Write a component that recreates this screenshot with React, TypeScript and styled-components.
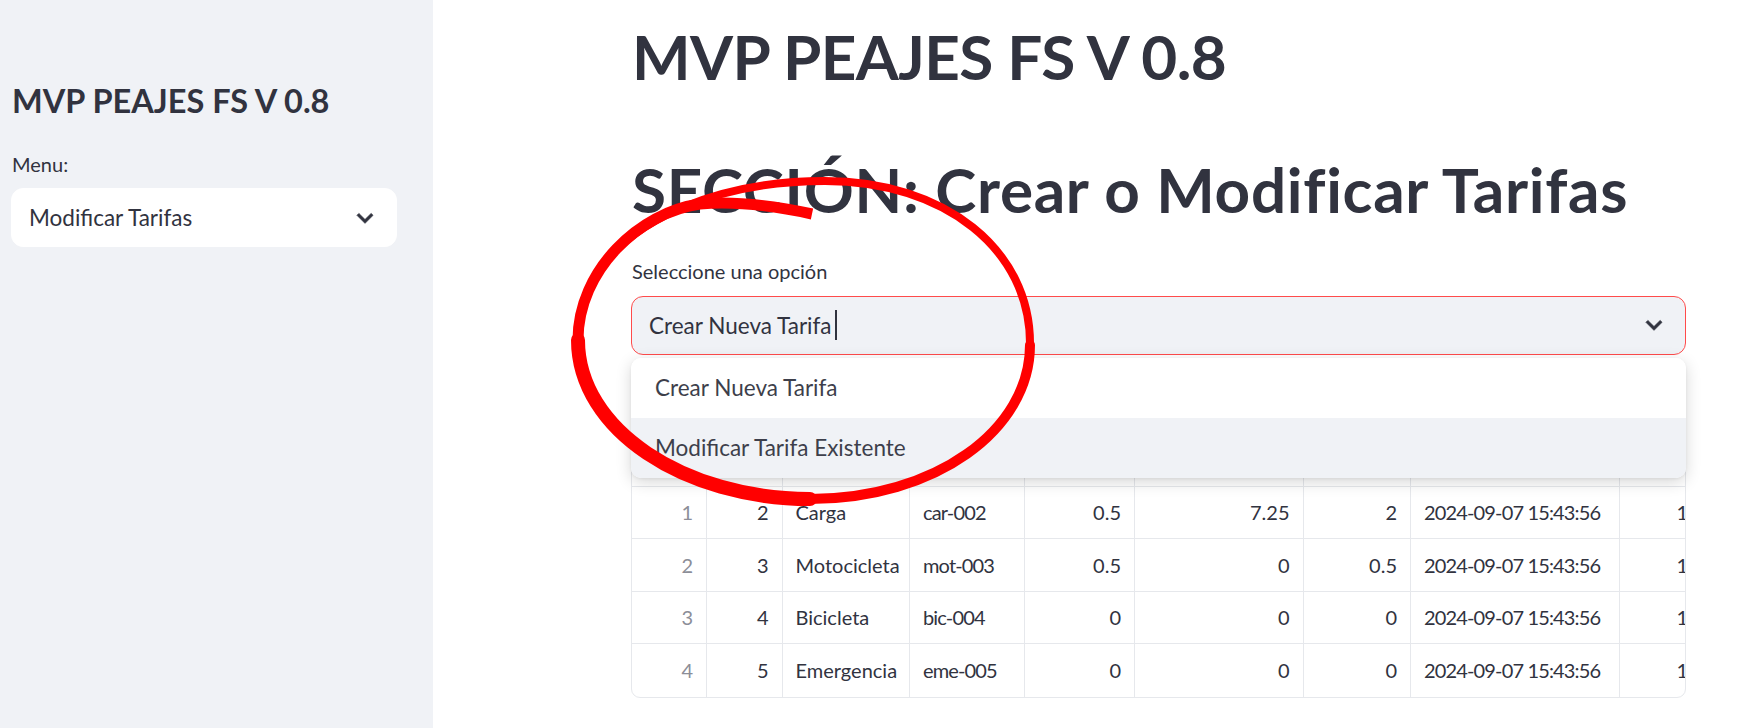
import React from "react";
import styled, { createGlobalStyle } from "styled-components";

const GlobalStyle = createGlobalStyle`
  html, body { margin: 0; padding: 0; background: #ffffff; }
  body { font-family: Lato, "Noto Sans", sans-serif; color: #31333f; }
  * { box-sizing: border-box; }
`;

const Page = styled.div`
  position: relative;
  display: flex;
  width: 1737px;
  height: 728px;
  overflow: hidden;
  background: #ffffff;
`;

const Sidebar = styled.aside`
  flex: 0 0 433px;
  height: 100%;
  background: #f0f2f6;
  padding: 79.5px 36px 0 11px;
  display: flex;
  flex-direction: column;
`;

const SideTitle = styled.h2`
  margin: 0 0 30px 1px;
  font-size: 32.5px;
  line-height: 42px;
  font-weight: 700;
  color: #31333f;
  white-space: nowrap;
`;

const FieldLabel = styled.label<{ $indent?: number }>`
  display: block;
  margin: 0 0 12.5px ${(p) => p.$indent ?? 1}px;
  font-size: 20px;
  line-height: 24px;
  color: #31333f;
`;

const SelectBox = styled.div<{ $variant: "light" | "focused" }>`
  position: relative;
  height: 59px;
  border-radius: 12px;
  display: flex;
  align-items: center;
  justify-content: space-between;
  padding: 0 15px 0 17px;
  font-size: 22.5px;
  color: #31333f;
  background: ${(p) => (p.$variant === "light" ? "#ffffff" : "#f0f2f6")};
  border: 1px solid ${(p) => (p.$variant === "light" ? "#ffffff" : "#ff4b4b")};
`;

const SelectValue = styled.span`
  display: flex;
  align-items: center;
  white-space: nowrap;
`;

const Caret = styled.span`
  display: inline-block;
  width: 2px;
  height: 30px;
  margin-left: 3px;
  background: #31333f;
`;

const Main = styled.main`
  flex: 1 1 auto;
  padding: 18px 0 0 198px;
`;

const Content = styled.div`
  width: 1055px;
  display: flex;
  flex-direction: column;
`;

const Title = styled.h1<{ $gap?: number; $tracking?: number }>`
  margin: ${(p) => p.$gap ?? 0}px 0 0 1px;
  font-size: 62px;
  line-height: 76px;
  font-weight: 700;
  letter-spacing: ${(p) => p.$tracking ?? 0}px;
  color: #31333f;
  white-space: nowrap;
`;

const FieldBlock = styled.div`
  margin-top: 32px;
  position: relative;
  z-index: 2;
`;

const SelectWrap = styled.div`
  position: relative;
`;

const Menu = styled.ul`
  position: absolute;
  left: 0;
  right: 0;
  top: calc(100% + 3px);
  margin: 0;
  padding: 0;
  list-style: none;
  background: #ffffff;
  border-radius: 10px;
  overflow: hidden;
  box-shadow: 0 4px 16px rgba(0, 0, 0, 0.16), 0 1px 3px rgba(0, 0, 0, 0.06);
`;

const MenuItem = styled.li<{ $active?: boolean }>`
  height: 60px;
  display: flex;
  align-items: center;
  padding-left: 24px;
  font-size: 22.5px;
  color: #3d3f4b;
  background: ${(p) => (p.$active ? "#f0f2f6" : "#ffffff")};
`;

const Table = styled.div`
  margin-top: 26px;
  width: 1055px;
  border: 1px solid #e6e8ec;
  border-radius: 9px;
  overflow: hidden;
  font-size: 20px;
`;

const Row = styled.div<{ $header?: boolean }>`
  display: grid;
  grid-template-columns: 75px 75.5px 127.5px 115px 110px 168.5px 107.5px 209px 82px;
  height: 52.5px;
  border-bottom: 1px solid #e6e8ec;
  &:last-child { border-bottom: none; }
  color: ${(p) => (p.$header ? "#808495" : "#31333f")};
`;

const Cell = styled.div<{ $align?: "left" | "right"; $muted?: boolean; $digits?: boolean }>`
  display: flex;
  align-items: center;
  justify-content: ${(p) => (p.$align === "left" ? "flex-start" : "flex-end")};
  padding: 0 13px;
  border-right: 1px solid #e6e8ec;
  white-space: nowrap;
  overflow: hidden;
  letter-spacing: ${(p) => (p.$digits ? "-0.85px" : "0")};
  color: ${(p) => (p.$muted ? "#8c8e98" : "inherit")};
`;

const Overlay = styled.svg`
  position: absolute;
  left: 0;
  top: 0;
  width: 1737px;
  height: 728px;
  pointer-events: none;
  z-index: 10;
`;

const Chevron = () => (
  <svg width="32" height="32" viewBox="0 0 24 24" aria-hidden="true">
    <path
      d="M16.59 8.59L12 13.17 7.41 8.59 6 10l6 6 6-6z"
      fill="#31333f"
      stroke="#31333f"
      strokeWidth="0.6"
    />
  </svg>
);

type RowData = [string, string, string, string, string, string, string, string, string];

const header: RowData = ["", "id", "tipo", "codigo", "base", "adicional", "factor", "actualizado", "activo"];

const rows: RowData[] = [
  ["0", "1", "Liviano", "liv-001", "0.5", "2.5", "1", "2024-09-07 15:43:56", "1"],
  ["1", "2", "Carga", "car-002", "0.5", "7.25", "2", "2024-09-07 15:43:56", "1"],
  ["2", "3", "Motocicleta", "mot-003", "0.5", "0", "0.5", "2024-09-07 15:43:56", "1"],
  ["3", "4", "Bicicleta", "bic-004", "0", "0", "0", "2024-09-07 15:43:56", "1"],
  ["4", "5", "Emergencia", "eme-005", "0", "0", "0", "2024-09-07 15:43:56", "1"],
];

const leftCols = new Set([2, 3, 7]);
const digitCols = new Set([3, 7]);

export default function App() {
  return (
    <>
      <GlobalStyle />
      <Page>
        <Sidebar>
          <SideTitle>MVP PEAJES FS V 0.8</SideTitle>
          <FieldLabel>Menu:</FieldLabel>
          <SelectBox $variant="light">
            <SelectValue>Modificar Tarifas</SelectValue>
            <Chevron />
          </SelectBox>
        </Sidebar>
        <Main>
          <Content>
            <Title $tracking={-0.6}>MVP PEAJES FS V 0.8</Title>
            <Title $gap={57} $tracking={0.7}>
              SECCIÓN: Crear o Modificar Tarifas
            </Title>
            <FieldBlock>
              <FieldLabel $indent={1}>Seleccione una opción</FieldLabel>
              <SelectWrap>
                <SelectBox $variant="focused">
                  <SelectValue>
                    Crear Nueva Tarifa
                    <Caret />
                  </SelectValue>
                  <Chevron />
                </SelectBox>
                <Menu>
                  <MenuItem>Crear Nueva Tarifa</MenuItem>
                  <MenuItem $active>Modificar Tarifa Existente</MenuItem>
                </Menu>
              </SelectWrap>
            </FieldBlock>
            <Table>
              <Row $header>
                {header.map((h, i) => (
                  <Cell key={i} $align="left">
                    {h}
                  </Cell>
                ))}
              </Row>
              {rows.map((r, ri) => (
                <Row key={ri}>
                  {r.map((v, ci) => (
                    <Cell
                      key={ci}
                      $align={leftCols.has(ci) ? "left" : "right"}
                      $muted={ci === 0}
                      $digits={digitCols.has(ci)}
                    >
                      {v}
                    </Cell>
                  ))}
                </Row>
              ))}
            </Table>
          </Content>
        </Main>
        <Overlay viewBox="0 0 1737 728">
          <g fill="none" stroke="#ff0000" strokeLinecap="round">
            <path d="M1030 345 C1031 250 945 181 825 181 C720 181 632 218 596 275" strokeWidth="8" />
            <path d="M812 214 C775 206 735 201 700 204 C640 212 578 270 578 340" strokeWidth="11" strokeLinecap="butt" />
            <path d="M578 340 C578 430 685 499 810 499" strokeWidth="14" />
            <path d="M810 499 C935 499 1030 430 1030 345" strokeWidth="10" />
          </g>
        </Overlay>
      </Page>
    </>
  );
}
